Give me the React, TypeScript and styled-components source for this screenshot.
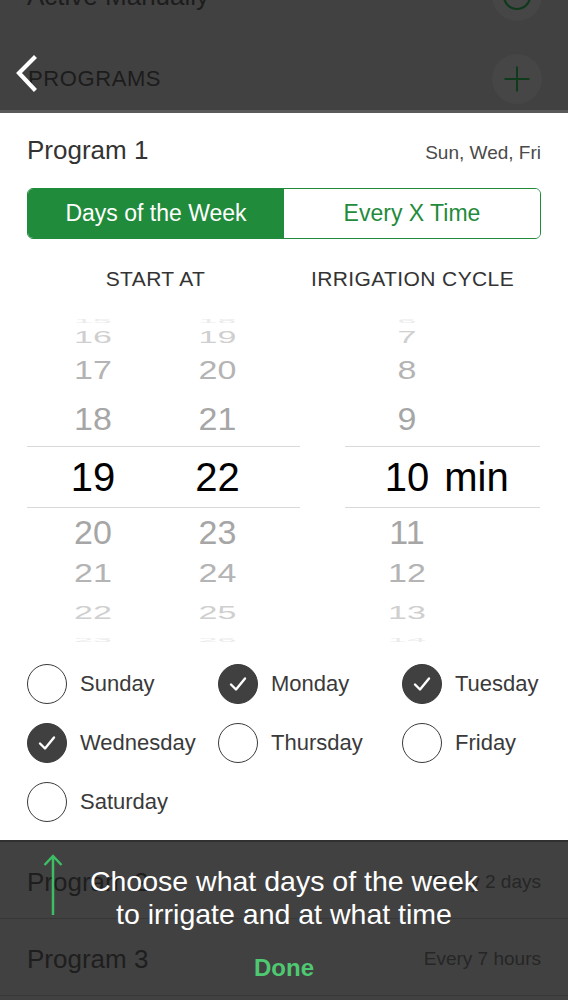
import React from 'react';
import styled, { createGlobalStyle } from 'styled-components';

const GlobalStyle = createGlobalStyle`
  html, body { margin: 0; padding: 0; background: #414141; }
  body { font-family: "Liberation Sans", Arial, Helvetica, sans-serif; -webkit-font-smoothing: antialiased; }
  * { box-sizing: border-box; }
`;

const Screen = styled.div`
  position: relative;
  width: 568px;
  height: 1000px;
  overflow: hidden;
  background: #414141;
  display: flex;
  flex-direction: column;
`;

/* ---------- dimmed top area ---------- */
const TopArea = styled.div`
  position: relative;
  height: 113px;
  flex-shrink: 0;
  display: flex;
  flex-direction: column;
  border-bottom: 3px solid #5a5a5a;
`;

const PrevRow = styled.div`
  height: 50px;
  margin-top: -29px;
  display: flex;
  align-items: center;
  justify-content: space-between;
  padding: 0 26px 0 27px;
`;

const DimText = styled.span`
  font-size: 26px;
  color: #1d1d1d;
`;

const HeaderRow = styled.div`
  margin-top: auto;
  height: 62px;
  display: flex;
  align-items: center;
  justify-content: space-between;
  padding: 0 26px 0 28px;
`;

const HeaderTitle = styled.span`
  font-size: 22px;
  letter-spacing: 0.6px;
  color: #1c1c1c;
`;

const RoundButton = styled.div`
  width: 50px;
  height: 50px;
  border-radius: 50%;
  background: #464646;
  display: flex;
  align-items: center;
  justify-content: center;
`;

const BackChevron = styled.svg`
  position: absolute;
  left: 14px;
  top: 54px;
`;

/* ---------- card ---------- */
const Card = styled.div`
  flex-shrink: 0;
  height: 727px;
  background: #ffffff;
  padding: 0 27px;
  display: flex;
  flex-direction: column;
`;

const TitleRow = styled.div`
  height: 75px;
  display: flex;
  align-items: center;
  justify-content: space-between;
`;

const ProgramTitle = styled.span`
  font-size: 26px;
  color: #333333;
`;

const ProgramDays = styled.span`
  font-size: 19px;
  color: #4a4a4a;
  padding-top: 4px;
`;

const Segmented = styled.div`
  height: 51px;
  display: grid;
  grid-template-columns: 1fr 1fr;
  border: 1.5px solid #1f8b3b;
  border-radius: 6px;
  overflow: hidden;
`;

const Segment = styled.div<{ $active?: boolean }>`
  display: flex;
  align-items: center;
  justify-content: center;
  font-size: 23px;
  background: ${p => (p.$active ? '#1f8b3b' : '#ffffff')};
  color: ${p => (p.$active ? '#ffffff' : '#1f8b3b')};
`;

const ColumnHeaders = styled.div`
  margin-top: 24px;
  height: 32px;
  display: grid;
  grid-template-columns: 1fr 1fr;
  align-items: center;
`;

const ColHeader = styled.div`
  text-align: center;
  font-size: 21px;
  letter-spacing: 0.4px;
  color: #333333;
`;

const Pickers = styled.div`
  margin-top: 21px;
  display: flex;
  gap: 45px;
`;

const Wheel = styled.div<{ $width: number }>`
  position: relative;
  width: ${p => p.$width}px;
  display: flex;
  flex-direction: column;
`;

const WheelRow = styled.div<{ $h: number; $cols: string; $selected?: boolean }>`
  height: ${p => p.$h}px;
  flex-shrink: 0;
  display: grid;
  grid-template-columns: ${p => p.$cols};
  grid-template-rows: minmax(0, 1fr);
  border-top: ${p => (p.$selected ? '1px solid #d9d9d9' : 'none')};
  border-bottom: ${p => (p.$selected ? '1px solid #d9d9d9' : 'none')};
`;

const WheelCell = styled.div`
  min-height: 0;
  display: flex;
  align-items: center;
  justify-content: center;
  overflow: visible;
`;

const WheelText = styled.span<{ $size: number; $color: string; $scale: number }>`
  position: relative;
  display: inline-block;
  font-size: ${p => p.$size}px;
  line-height: 1;
  color: ${p => p.$color};
  transform: scaleY(${p => p.$scale});
  white-space: nowrap;
`;

const Unit = styled.span`
  position: absolute;
  left: calc(100% + 15px);
  top: 0;
  font-size: 40px;
  line-height: 1;
  color: #000;
`;

const DayGrid = styled.div`
  margin-top: 20px;
  display: grid;
  grid-template-columns: 191px 184px 1fr;
  row-gap: 19px;
`;

const DayItem = styled.div`
  display: flex;
  align-items: center;
  gap: 13px;
  height: 40px;
`;

const CheckCircle = styled.div<{ $checked?: boolean }>`
  width: 40px;
  height: 40px;
  flex-shrink: 0;
  border-radius: 50%;
  border: 1.5px solid #3a3a3a;
  background: ${p => (p.$checked ? '#404040' : '#ffffff')};
  display: flex;
  align-items: center;
  justify-content: center;
`;

const DayLabel = styled.span`
  font-size: 22px;
  color: #3a3a3a;
`;

/* ---------- dimmed list below ---------- */
const List = styled.div`
  border-top: 2px solid #303030;
`;

const ListRow = styled.div`
  height: 77px;
  display: flex;
  align-items: center;
  justify-content: space-between;
  padding: 4px 27px 0 27px;
  border-bottom: 1px solid #373737;
`;

const RowTitle = styled.span`
  font-size: 26px;
  color: #1e1e1e;
`;

const RowMeta = styled.span`
  font-size: 19px;
  color: #262626;
`;

/* ---------- coach-mark overlay ---------- */
const Coach = styled.div`
  position: absolute;
  left: 0;
  right: 0;
  top: 840px;
  bottom: 0;
  display: flex;
  flex-direction: column;
  align-items: center;
  padding-top: 25px;
`;

const CoachText = styled.div`
  font-size: 28.5px;
  line-height: 33px;
  color: #ffffff;
  text-align: center;
`;

const Done = styled.div`
  margin-top: 23px;
  font-size: 24px;
  font-weight: bold;
  color: #4fc872;
`;

const Arrow = styled.svg`
  position: absolute;
  left: 43px;
  top: 13px;
`;

type RowSpec = { h: number; s: number; c: string; size: number; selected?: boolean };

const ROWS: RowSpec[] = [
  { h: 10, s: 0.18, c: '#ebebeb', size: 34 },
  { h: 22, s: 0.48, c: '#cfcfcf', size: 34 },
  { h: 44, s: 0.76, c: '#b4b4b4', size: 34 },
  { h: 54, s: 0.92, c: '#a6a6a6', size: 34 },
  { h: 62, s: 1, c: '#000000', size: 40, selected: true },
  { h: 47, s: 0.97, c: '#a6a6a6', size: 34 },
  { h: 35, s: 0.76, c: '#b4b4b4', size: 34 },
  { h: 46, s: 0.53, c: '#cfcfcf', size: 34 },
  { h: 8, s: 0.18, c: '#ebebeb', size: 34 },
];

const range = (start: number) => ROWS.map((_, i) => String(start + i));

function Picker({
  width,
  cols,
  columns,
  unit,
}: {
  width: number;
  cols: string;
  columns: string[][];
  unit?: string;
}) {
  return (
    <Wheel $width={width}>
      {ROWS.map((r, i) => (
        <WheelRow key={i} $h={r.h} $cols={cols} $selected={r.selected}>
          {columns.map((col, j) => (
            <WheelCell key={j}>
              <WheelText $size={r.size} $color={r.c} $scale={r.s}>
                {col[i]}
                {r.selected && unit ? <Unit>{unit}</Unit> : null}
              </WheelText>
            </WheelCell>
          ))}
        </WheelRow>
      ))}
    </Wheel>
  );
}

const Check = () => (
  <svg width="22" height="22" viewBox="0 0 22 22">
    <polyline points="4,11.5 9,16.5 18,5.5" fill="none" stroke="#ffffff" strokeWidth="2.4" strokeLinecap="round" strokeLinejoin="round" />
  </svg>
);

const DAYS: [string, boolean][] = [
  ['Sunday', false],
  ['Monday', true],
  ['Tuesday', true],
  ['Wednesday', true],
  ['Thursday', false],
  ['Friday', false],
  ['Saturday', false],
];

export default function App() {
  return (
    <>
      <GlobalStyle />
      <Screen>
        <TopArea>
          <PrevRow>
            <DimText>Active Manually</DimText>
            <RoundButton>
              <svg width="30" height="30" viewBox="0 0 30 30">
                <circle cx="15" cy="15" r="13" fill="none" stroke="#0e3a1b" strokeWidth="2.2" />
              </svg>
            </RoundButton>
          </PrevRow>
          <HeaderRow>
            <HeaderTitle>PROGRAMS</HeaderTitle>
            <RoundButton>
              <svg width="28" height="28" viewBox="0 0 28 28">
                <path d="M14 1.5V26.5M1.5 14H26.5" stroke="#0f3b1c" strokeWidth="2" />
              </svg>
            </RoundButton>
          </HeaderRow>
          <BackChevron width="24" height="40" viewBox="0 0 24 40">
            <polyline points="20,4 5,19 20,35" fill="none" stroke="#ffffff" strokeWidth="4.2" strokeLinecap="square" />
          </BackChevron>
        </TopArea>

        <Card>
          <TitleRow>
            <ProgramTitle>Program 1</ProgramTitle>
            <ProgramDays>Sun, Wed, Fri</ProgramDays>
          </TitleRow>
          <Segmented>
            <Segment $active>Days of the Week</Segment>
            <Segment>Every X Time</Segment>
          </Segmented>
          <ColumnHeaders>
            <ColHeader>START AT</ColHeader>
            <ColHeader>IRRIGATION CYCLE</ColHeader>
          </ColumnHeaders>
          <Pickers>
            <Picker width={273} cols="132px 117px 1fr" columns={[range(15), range(18)]} />
            <Picker width={195} cols="124px 1fr" columns={[range(6)]} unit="min" />
          </Pickers>
          <DayGrid>
            {DAYS.map(([d, c]) => (
              <DayItem key={d}>
                <CheckCircle $checked={c}>{c ? <Check /> : null}</CheckCircle>
                <DayLabel>{d}</DayLabel>
              </DayItem>
            ))}
          </DayGrid>
        </Card>

        <List>
          <ListRow>
            <RowTitle>Program 2</RowTitle>
            <RowMeta>Every 2 days</RowMeta>
          </ListRow>
          <ListRow>
            <RowTitle>Program 3</RowTitle>
            <RowMeta>Every 7 hours</RowMeta>
          </ListRow>
        </List>

        <Coach>
          <Arrow width="20" height="64" viewBox="0 0 20 64">
            <path d="M10 62V3M1.5 12L10 3L18.5 12" fill="none" stroke="#3dbd64" strokeWidth="2.5" />
          </Arrow>
          <CoachText>
            Choose what days of the week
            <br />
            to irrigate and at what time
          </CoachText>
          <Done>Done</Done>
        </Coach>
      </Screen>
    </>
  );
}
